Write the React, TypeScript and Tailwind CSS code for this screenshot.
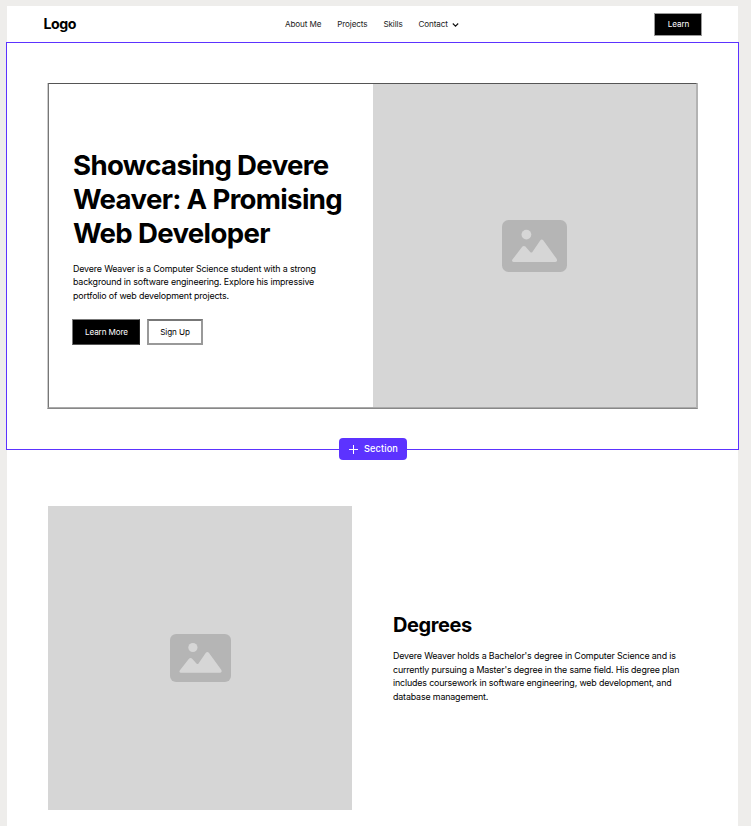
import React from "react";

function PlaceholderIcon({ className }: { className: string }) {
  return (
    <svg className={className} viewBox="0 0 65 52" preserveAspectRatio="none" aria-hidden="true">
      <rect width="65" height="52" rx="6.5" fill="#b5b5b5" />
      <circle cx="24.4" cy="14.6" r="4.9" fill="#d6d6d6" />
      <path
        d="M10.4 39.6 20.4 26.6q1.5-1.4 3 0l5 5.6q.9.8 1.8 0L38.2 20.4q1.6-1.6 3.2 0L54.6 38.8q1.4 3-1.4 3.2H11.6q-2.4-.2-1.2-2.4Z"
        fill="#d6d6d6"
      />
    </svg>
  );
}

function Header() {
  return (
    <header className="flex h-9 items-center pr-[36px] pl-[36.5px]">
      <div className="w-[241.5px] pb-px text-[14.2px] leading-[18px] font-bold tracking-[-0.45px] text-black">Logo</div>
      <nav className="flex items-center gap-[16px] text-[8.12px] leading-3 tracking-[-0.12px] text-[#222] whitespace-nowrap">
        <span>About Me</span>
        <span>Projects</span>
        <span>Skills</span>
        <span className="flex items-center gap-[4px]">
          Contact
          <svg className="mt-px h-[6px] w-[7px]" viewBox="0 0 7 6" fill="none" stroke="#111" strokeWidth="1.1">
            <path d="M.8 1.5 3.5 4.2 6.2 1.5" />
          </svg>
        </span>
      </nav>
      <button className="mt-px ml-auto h-[23px] w-[48px] border border-[#999] bg-black pb-px pl-px text-[8.12px] leading-3 tracking-[-0.1px] text-white">
        Learn
      </button>
    </header>
  );
}

function Hero() {
  return (
    <section className="relative -mx-px h-[408px] border border-[#5c33ff] pt-[40px] pl-[40px]">
      <div className="h-[326px] w-[651px] border-r border-b border-l border-r-[#b3b3b3] border-b-[#888] border-l-[#ccc]">
        <div className="flex h-[325px] border border-t-[#555] border-r-[#b3b3b3] border-b-[#aaa] border-l-[#777]">
          <div className="flex w-[324px] flex-col justify-center pt-[2px] pl-[24px]">
            <h1 className="text-[27.6px] leading-[34.1px] font-bold tracking-[-0.67px] text-black whitespace-nowrap">
              Showcasing Devere
              <br />
              Weaver: A Promising
              <br />
              Web Developer
            </h1>
            <p className="mt-[11px] text-[8.9px] leading-[13.7px] tracking-[-0.16px] text-black whitespace-nowrap">
              Devere Weaver is a Computer Science student with a strong
              <br />
              background in software engineering. Explore his impressive
              <br />
              portfolio of web development projects.
            </p>
            <div className="mt-[16px] -ml-px flex gap-[7px] text-[8.12px] leading-3 tracking-[-0.1px]">
              <button className="h-[26px] w-[68px] border border-t-[#777] border-r-[#222] border-b-[#555] border-l-[#777] bg-black pl-px text-white">
                Learn More
              </button>
              <button className="h-[26px] w-[56px] border-2 border-t-[#777] border-r-[#999] border-b-[#999] border-l-[#999] bg-white text-black">
                Sign Up
              </button>
            </div>
          </div>
          <div className="flex flex-1 items-center justify-center bg-[#d6d6d6]">
            <PlaceholderIcon className="h-[52px] w-[65px]" />
          </div>
        </div>
      </div>
      <button className="absolute top-[395px] left-[332px] flex h-[22px] w-[68px] items-center rounded-[4px] bg-[#5c33ff] pl-[10px] text-[9.2px] leading-3 font-medium tracking-[0.12px] text-white">
        <svg className="mr-[6px] h-[9px] w-[9px]" viewBox="0 0 9 9" stroke="white" strokeWidth="1">
          <path d="M4.5 0v9M0 4.5h9" />
        </svg>
        Section
      </button>
    </section>
  );
}

function Degrees() {
  return (
    <section className="flex gap-[41px] pt-[56px] pl-[41px]">
      <div className="flex h-[304px] w-[304px] items-center justify-center bg-[#d6d6d6]">
        <PlaceholderIcon className="h-[48px] w-[61px]" />
      </div>
      <div className="flex flex-col justify-center whitespace-nowrap text-black">
        <h2 className="pt-px text-[20px] leading-[24.4px] font-bold tracking-[-0.42px]">Degrees</h2>
        <p className="mt-[11px] text-[8.9px] leading-[13.7px] tracking-[-0.16px]">
          Devere Weaver holds a Bachelor's degree in Computer Science and is
          <br />
          currently pursuing a Master's degree in the same field. His degree plan
          <br />
          includes coursework in software engineering, web development, and
          <br />
          database management.
        </p>
      </div>
    </section>
  );
}

export default function App() {
  return (
    <div className="h-[826px] w-[751px] overflow-hidden bg-[#eeedeb] pt-[6px] pl-[7px] font-['Inter',sans-serif]">
      <main className="h-[820px] w-[731px] bg-white">
        <Header />
        <Hero />
        <Degrees />
      </main>
    </div>
  );
}
